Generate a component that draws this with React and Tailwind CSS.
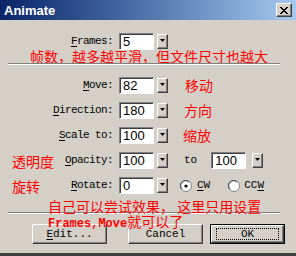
import React from "react";

const mono = { fontFamily: '"Liberation Mono", "DejaVu Sans Mono", monospace' };
const cjk = { fontFamily: '"Noto Sans CJK SC", "Noto Sans", sans-serif' };

const Ul = ({ children }) => <span className="underline underline-offset-2">{children}</span>;

const Drop = () => (
  <div className="w-[11px] h-[15px] flex items-start justify-center pt-[4px] bg-[#d4d0c8] border border-t-white border-l-white border-r-[#404040] border-b-[#404040] shadow-[inset_-1px_-1px_#808080]">
    <svg width="5" height="3" viewBox="0 0 5 3">
      <path d="M0 0H5L2.5 3Z" fill="#000" />
    </svg>
  </div>
);

const Field = ({ value }) => (
  <div
    className="w-[35px] h-[17px] bg-white border border-t-[#808080] border-l-[#808080] border-r-white border-b-white shadow-[inset_1px_1px_#404040] pl-[3px] text-[13px] leading-[15px] text-black"
    style={{ fontFamily: '"Liberation Sans", Arial, sans-serif' }}
  >
    {value}
  </div>
);

const Row = ({ note, label, value, children, mt }) => (
  <div className={`flex items-center h-[17px] ${mt}`}>
    <div className="w-[113px] flex items-center justify-between pl-[12px]">
      <span className="text-[14px] leading-[14px] text-[#ff0000]" style={cjk}>
        {note}
      </span>
      <span className="text-[11px] tracking-[-0.6px] text-black" style={mono}>
        {label}
      </span>
    </div>
    <div className="ml-[6px]">
      <Field value={value} />
    </div>
    <div className="ml-[3px]">
      <Drop />
    </div>
    {children}
  </div>
);

const Radio = ({ on }) => (
  <svg width="12" height="12" viewBox="0 0 12 12">
    <circle cx="6" cy="6" r="5.5" fill="#fff" stroke="#808080" />
    <path d="M2 9A4.5 4.5 0 0 1 9 2" fill="none" stroke="#404040" />
    {on && <circle cx="6" cy="6" r="1.6" fill="#000" />}
  </svg>
);

const Btn = ({ children, def, ml }) => (
  <div className={`${ml} ${def ? "border border-black" : ""}`}>
    <div
      className={`${def ? "w-[73px] h-[18px]" : "w-[75px] h-[20px]"} bg-[#d4d0c8] border border-t-white border-l-white border-r-[#404040] border-b-[#404040] shadow-[inset_-1px_-1px_#808080] flex items-center justify-center`}
    >
      <div
        className={`${def ? "border border-dotted border-black w-[63px] h-[12px]" : ""} flex items-center justify-center text-[11px] leading-[11px] text-black`}
        style={mono}
      >
        {children}
      </div>
    </div>
  </div>
);

const Sep = ({ mt }) => (
  <div className={`${mt} ml-[8px] w-[272px] h-[2px] border-t border-t-[#808080] border-b border-b-white`} />
);

export default function App() {
  return (
    <div className="w-[296px] h-[256px] bg-[#d4d0c8] overflow-hidden flex flex-col border-b-[3px] border-b-[#404040]">
      <div className="h-[20px] flex items-center justify-between pl-[4px] pr-[4px] bg-gradient-to-r from-[#0a246a] to-[#a6caf0]">
        <span
          className="text-white text-[13px] font-bold leading-[13px]"
          style={{ fontFamily: '"Liberation Sans", Arial, sans-serif' }}
        >
          Animate
        </span>
        <div className="w-[16px] h-[14px] bg-[#d4d0c8] border border-t-white border-l-white border-r-[#404040] border-b-[#404040] shadow-[inset_-1px_-1px_#808080] flex items-center justify-center">
          <svg width="8" height="7" viewBox="0 0 8 7">
            <path d="M0 0L7 7M1 0L8 7M7 0L0 7M8 0L1 7" stroke="#000" strokeWidth="1" />
          </svg>
        </div>
      </div>

      <Row mt="mt-[13px]" label={<><Ul>F</Ul>rames:</>} value="5" />
      <div className="h-[13px] pl-[30px] text-[14px] leading-[13px] text-[#ff0000] whitespace-nowrap" style={cjk}>
        帧数，越多越平滑，但文件尺寸也越大
      </div>
      <Sep mt="mt-0" />

      <Row mt="mt-[12px]" label={<><Ul>M</Ul>ove:</>} value="82">
        <span className="ml-[17px] text-[14px] text-[#ff0000]" style={cjk}>移动</span>
      </Row>
      <Row mt="mt-[8px]" label={<><Ul>D</Ul>irection:</>} value="180">
        <span className="ml-[16px] text-[14px] text-[#ff0000]" style={cjk}>方向</span>
      </Row>
      <Row mt="mt-[8px]" label={<><Ul>S</Ul>cale to:</>} value="100">
        <span className="ml-[15px] text-[14px] text-[#ff0000]" style={cjk}>缩放</span>
      </Row>
      <Row mt="mt-[8px]" note="透明度" label={<><Ul>O</Ul>pacity:</>} value="100">
        <span className="ml-[16px] text-[11px] text-black" style={mono}>to</span>
        <div className="ml-[14px]">
          <Field value="100" />
        </div>
        <div className="ml-[6px]">
          <Drop />
        </div>
      </Row>
      <Row mt="mt-[8px]" note="旋转" label={<><Ul>R</Ul>otate:</>} value="0">
        <div className="ml-[12px] flex items-center gap-[5px]">
          <Radio on />
          <span className="text-[11px] text-black" style={mono}><Ul>C</Ul>W</span>
        </div>
        <div className="ml-[18px] flex items-center gap-[4px]">
          <Radio />
          <span className="text-[11px] text-black" style={mono}>CC<Ul>W</Ul></span>
        </div>
      </Row>

      <div className="relative">
        <Sep mt="mt-[18px]" />
        <div className="flex mt-[10px]">
          <Btn ml="ml-[32px]"><Ul>E</Ul>dit...</Btn>
          <Btn ml="ml-[21px]">Cancel</Btn>
          <Btn ml="ml-[7px]" def>OK</Btn>
        </div>
        <div className="absolute left-[48px] top-[5px] text-[14px] leading-[15px] text-[#ff0000] whitespace-nowrap" style={cjk}>
          <div>自己可以尝试效果， 这里只用设置</div>
          <div>
            <span className="text-[12px] font-bold" style={mono}>Frames,Move</span>就可以了
          </div>
        </div>
      </div>
    </div>
  );
}
